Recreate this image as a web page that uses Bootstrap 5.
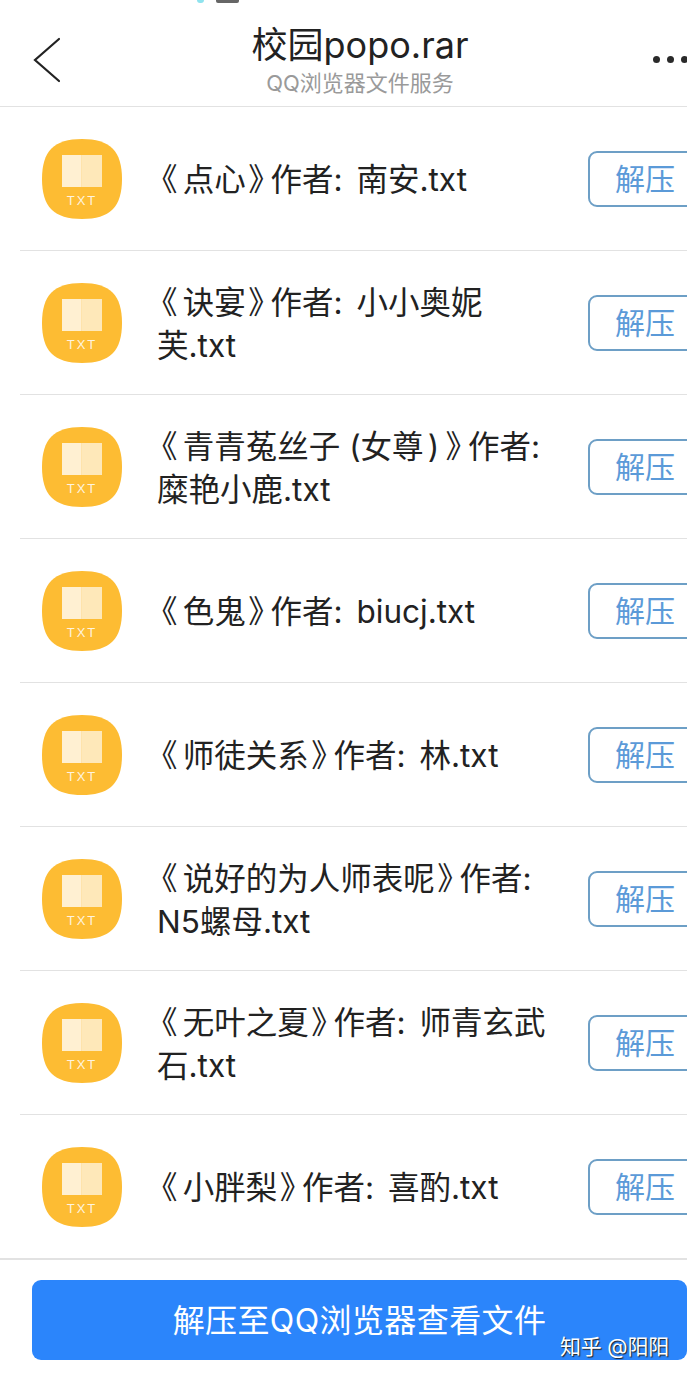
<!DOCTYPE html>
<html lang="zh">
<head>
<meta charset="UTF-8">
<meta name="viewport" content="width=device-width, initial-scale=1.0">
<title>校园popo.rar</title>
<link href="https://cdn.jsdelivr.net/npm/bootstrap@5.3.3/dist/css/bootstrap.min.css" rel="stylesheet">
<script src="https://cdn.jsdelivr.net/npm/bootstrap@5.3.3/dist/js/bootstrap.bundle.min.js"></script>
<style>
    html, body { height: 1376px; overflow: hidden; }
    body {
        font-family: Inter, "Noto Sans CJK SC", sans-serif;
        background: #fff;
        color: #222;
        position: relative;
    }
    .status-strip { height: 3px; padding-left: 197px; gap: 12px; }
    .status-dot { width: 7px; height: 3px; background: #8fe3ee; border-radius: 0 0 4px 4px; }
    .status-batt { width: 23px; height: 3px; background: #666; border-radius: 0 0 2px 2px; }
    .top-head { height: 104px; border-bottom: 1px solid #e2e2e2; }
    .back-btn { left: 33px; top: 32px; position: absolute; line-height: 0; }
    .more-dots { position: absolute; right: -1px; top: 53px; gap: 7px; }
    .more-dots span { width: 7px; height: 7px; background: #2a2a2a; border-radius: 50%; }
    .title-main { font-size: 36px; line-height: 44px; margin-top: 20px; color: #222; }
    .title-sub { font-size: 22px; line-height: 30px; margin-top: 1px; color: #9a9a9a; }
    .title-block { padding-left: 33px; }
    .file-row { height: 144px; margin-left: 20px; border-bottom: 1px solid #e2e2e2; }
    .file-row:last-child { border-bottom: 0; height: 143px; }
    .file-ico { width: 80px; height: 80px; margin-left: 22px; margin-right: 35px; flex: none; }
    .file-name { font-size: 31.5px; line-height: 43px; color: #222; flex: 1 1 auto; padding-top: 2px; }
    /* the picture's 《》 sit tighter than the font's full-width boxes */
    .bk-mark { font-feature-settings: "palt"; }
    .bk-l { padding-left: 4px; padding-right: 6px; }
    .bk-r { padding-left: 3px; padding-right: 6px; }
    .colon-gap { padding-left: 5px; }
    .paren-gap { padding-left: 4px; padding-right: 4px; }
    .unzip-btn {
        width: 112px; height: 56px; flex: none; margin-right: -13px;
        border: 2px solid #6d9fc6; border-radius: 9px 0 0 9px;
        background: #fff; color: #5b9ad8; font-size: 30px; line-height: 1;
        padding: 1px 0 0 25px; text-align: left;
    }
    .foot-bar { height: 117px; border-top: 2px solid #e2e2e2; padding: 20px 0 0 32px; }
    .foot-btn {
        height: 80px; width: 100%; border: 0; border-radius: 9px;
        background: #2b85fb; color: #fff; font-size: 32px; padding: 1px 0 0; letter-spacing: .4px;
    }
    .zhihu-mark {
        position: absolute; left: 560px; top: 1333px; font-size: 21px; line-height: 28px;
        color: #fff; text-shadow: 1px 1px 1px #222; letter-spacing: -.2px;
    }
</style>
</head>
<body>
<div class="status-strip d-flex">
    <span class="status-dot"></span>
    <span class="status-batt"></span>
</div>

<div class="top-head position-relative text-center">
    <a class="back-btn" href="#" aria-label="返回">
        <svg width="28" height="50" viewBox="0 0 28 50"><path d="M26 4 2 25l24 21" fill="none" stroke="#222" stroke-width="2.2" stroke-linecap="round"/></svg>
    </a>
    <div class="title-block d-flex flex-column align-items-center">
        <div class="title-main">校园popo.rar</div>
        <div class="title-sub">QQ浏览器文件服务</div>
    </div>
    <div class="more-dots d-flex"><span></span><span></span><span></span></div>
</div>

<div id="fileList"></div>

<div class="foot-bar">
    <button class="foot-btn" type="button">解压至QQ浏览器查看文件</button>
</div>
<div class="zhihu-mark">知乎 @阳阳</div>

<script>
    const files = [
        '《点心》作者: 南安.txt',
        '《诀宴》作者: 小小奥妮<br>芙.txt',
        '《青青菟丝子 (女尊)》作者:<br>糜艳小鹿.txt',
        '《色鬼》作者: biucj.txt',
        '《师徒关系》作者: 林.txt',
        '《说好的为人师表呢》作者:<br>N5螺母.txt',
        '《无叶之夏》作者: 师青玄武<br>石.txt',
        '《小胖梨》作者: 喜酌.txt'
    ];
    const tidy = s => s
        .replace('《', '<span class="bk-mark bk-l">《</span>')
        .replace('》', '<span class="bk-mark bk-r">》</span>')
        .replace(')', '<span class="paren-gap">)</span>')
        .replace(': ', ':<span class="colon-gap"> </span>');
    const icon = `
        <svg class="file-ico" viewBox="0 0 80 80">
            <path d="M40 0C68 0 80 12 80 40S68 80 40 80 0 68 0 40 12 0 40 0Z" fill="#fdbc33"/>
            <path d="M20 16h19.500v32H20z" fill="#fff" fill-opacity=".78"/>
            <path d="M39.500 16H60v32H39.500z" fill="#fff" fill-opacity=".66"/>
            <text x="40" y="66" text-anchor="middle" font-family="Liberation Sans, sans-serif" font-size="13" letter-spacing="2" fill="#fff" fill-opacity=".85">TXT</text>
        </svg>`;
    document.getElementById('fileList').innerHTML = files.map(name => `
        <div class="file-row d-flex align-items-center">
            ${icon}
            <div class="file-name">${tidy(name)}</div>
            <button class="unzip-btn" type="button">解压</button>
        </div>`).join('');
</script>
</body>
</html>
